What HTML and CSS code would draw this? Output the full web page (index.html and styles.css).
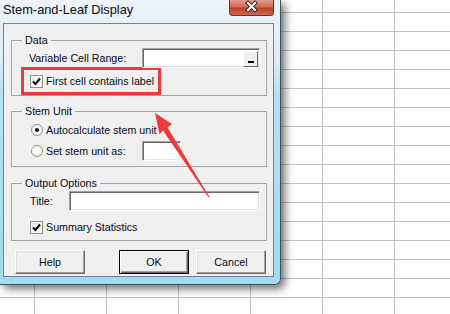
FILE: index.html
```html
<!DOCTYPE html>
<html lang="en">
<head>
    <meta charset="UTF-8">
    <title>Stem-and-Leaf Display</title>
    <link rel="stylesheet" href="styles.css">
</head>
<body>

<div class="window">
    <div class="titlebar">
        <span class="title">Stem-and-Leaf Display</span>
        <span class="close">
            <svg width="45" height="16" viewBox="0 0 45 16">
                <path d="M19 4 L26 11 M26 4 L19 11" stroke="#3a2a28" stroke-width="4" stroke-linecap="square"/>
                <path d="M19 4 L26 11 M26 4 L19 11" stroke="#ffffff" stroke-width="2" stroke-linecap="square"/>
            </svg>
        </span>
    </div>

    <div class="client">
        <fieldset class="group">
            <legend>Data</legend>
            <div class="field-row">
                <span class="field-label">Variable Cell Range:</span>
                <span class="textbox range">
                    <span class="ref-btn"><span class="ref-bar"></span></span>
                </span>
            </div>
            <div class="highlight">
                <span class="check">
                    <svg width="9" height="9" viewBox="0 0 9 9"><path d="M1 4.5 L3.5 7 L8 1.5" fill="none" stroke="#000" stroke-width="2"/></svg>
                </span>
                First cell contains label
            </div>
        </fieldset>

        <fieldset class="group stem">
            <legend>Stem Unit</legend>
            <div class="option-row first">
                <span class="radio checked"></span>
                Autocalculate stem unit
            </div>
            <div class="option-row second">
                <span class="radio"></span>
                <span class="option-label">Set stem unit as:</span>
                <span class="textbox unit"></span>
            </div>
        </fieldset>

        <fieldset class="group output">
            <legend>Output Options</legend>
            <div class="title-row">
                <span class="title-label">Title:</span>
                <span class="textbox title-box"></span>
            </div>
            <div class="summary-row">
                <span class="check">
                    <svg width="9" height="9" viewBox="0 0 9 9"><path d="M1 4.5 L3.5 7 L8 1.5" fill="none" stroke="#000" stroke-width="2"/></svg>
                </span>
                Summary Statistics
            </div>
        </fieldset>

        <div class="buttons">
            <button class="btn help">Help</button>
            <button class="btn ok">OK</button>
            <button class="btn cancel">Cancel</button>
        </div>
    </div>
</div>

<svg class="arrow" width="450" height="314" viewBox="0 0 450 314">
    <polygon points="155,113 172,124 167.5,127.5 209.5,197 208.5,197.5 163,130.5 159.5,134" fill="#f03a3c"/>
</svg>

</body>
</html>
```

FILE: styles.css
```css
body {
    margin: 0;
    width: 450px;
    height: 314px;
    overflow: hidden;
    position: relative;
    font-family: 'Liberation Sans', Arial, sans-serif;
    font-size: 10.7px;
    color: #0a0a1a;
    background-color: #fff;
    background-image:
        linear-gradient(to right, #c2c2c2 1px, transparent 1px),
        linear-gradient(to bottom, #c2c2c2 1px, transparent 1px);
    background-size: 72px 100%, 100% 19px;
    background-position: 34px 0, 0 12px;
}
.window {
    width: 271px;
    padding: 0 6px 7px 3px;
    border-right: 1px solid #3d5261;
    border-bottom: 1px solid #3d5261;
    border-bottom-right-radius: 6px;
    background: linear-gradient(to bottom, #eef3f7 0, #dcebf4 60px, #b4e1f2 95px, #a3dbef 100%);
    box-shadow: 4px 4px 9px rgba(0,0,0,0.55);
}
.titlebar {
    height: 23px;
    display: flex;
    justify-content: space-between;
    align-items: flex-start;
}
.title {
    font-size: 12.8px;
    line-height: 15px;
    padding-top: 2px;
}
.close {
    width: 45px;
    height: 16px;
    box-sizing: border-box;
    border: 1px solid #7c2b20;
    border-top: none;
    border-radius: 0 0 4px 4px;
    background: linear-gradient(to bottom, #e19c8c 0, #d46b57 45%, #c23f27 55%, #cf6a50 100%);
}
.close svg {
    display: block;
    margin: -1px 0 0 -1px;
}
.client {
    height: 252px;
    border: 1px solid #6f8290;
    background: #f0f0f0;
}
.group {
    width: 254px;
    margin: 10px 0 0 7px;
    padding: 0;
    border: 1px solid #a3a3a3;
}
.group legend {
    margin-left: 10px;
    padding: 0 3px;
    line-height: 12px;
}
.group.stem {
    margin-top: 9px;
    padding-bottom: 5px;
}
.group.output {
    margin-top: 10px;
    padding-bottom: 3px;
}
.textbox {
    display: flex;
    justify-content: flex-end;
    box-sizing: border-box;
    height: 20px;
    padding: 1px;
    background: #fff;
    border: 1px solid;
    border-color: #a0a0a0 #fff #fff #a0a0a0;
    box-shadow: inset 1px 1px #696969, inset -1px -1px #e3e3e3;
}
.field-row {
    display: flex;
    align-items: center;
    height: 20px;
    margin-top: 2px;
    padding-left: 17px;
}
.field-label {
    width: 113px;
}
.textbox.range {
    width: 118px;
}
.ref-btn {
    width: 15px;
    height: 16px;
    box-sizing: border-box;
    margin-top: 1px;
    background: #f0f0f0;
    border: 1px solid;
    border-color: #fff #696969 #696969 #fff;
    display: flex;
    justify-content: center;
    align-items: flex-end;
}
.ref-bar {
    width: 6px;
    height: 2px;
    margin-bottom: 3px;
    background: #000;
}
.highlight {
    display: flex;
    align-items: center;
    width: 128px;
    height: 22px;
    margin: -1px 0 0 9px;
    padding-left: 6px;
    border: 3px solid #ee383d;
}
.check {
    display: flex;
    justify-content: center;
    align-items: center;
    width: 13px;
    height: 13px;
    box-sizing: border-box;
    margin-right: 3px;
    border: 1px solid #8e8f8f;
    background: linear-gradient(135deg, #e2e2e2, #fff);
    box-shadow: inset 0 0 0 1px #f4f4f4;
}
.option-row {
    display: flex;
    align-items: center;
    padding-left: 19px;
}
.option-row.first {
    height: 16px;
    margin-top: 5px;
}
.option-row.second {
    height: 20px;
    margin-top: 3px;
}
.radio {
    width: 12px;
    height: 12px;
    box-sizing: border-box;
    margin-right: 3px;
    border: 1px solid #8e8f8f;
    border-radius: 50%;
    background: radial-gradient(circle at 40% 40%, #fff 40%, #e4e4e4);
    position: relative;
}
.radio.checked::after {
    content: '';
    position: absolute;
    left: 3px;
    top: 3px;
    width: 4px;
    height: 4px;
    border-radius: 50%;
    background: #111;
}
.option-label {
    width: 96px;
}
.textbox.unit {
    width: 39px;
}
.title-row {
    display: flex;
    align-items: center;
    height: 20px;
    margin-top: 2px;
    padding-left: 18px;
}
.title-label {
    width: 39px;
}
.textbox.title-box {
    width: 191px;
}
.summary-row {
    display: flex;
    align-items: center;
    height: 20px;
    margin-top: 6px;
    padding-left: 18px;
}
.buttons {
    display: flex;
    margin-top: 9px;
}
.btn {
    width: 70px;
    height: 24px;
    padding: 0;
    font-family: 'Liberation Sans', Arial, sans-serif;
    font-size: 10.7px;
    color: #0a0a1a;
    background: #f0f0f0;
    border: 1px solid;
    border-color: #fff #696969 #696969 #fff;
    box-shadow: inset -1px -1px #a0a0a0, inset 1px 1px #e3e3e3;
}
.btn.help {
    margin-left: 11px;
}
.btn.ok {
    margin-left: 34px;
    outline: 1px solid #000;
    outline-offset: -1px;
    border-color: #000;
    box-shadow: inset 1px 1px #fff, inset -1px -1px #696969, inset -2px -2px #a0a0a0;
}
.btn.cancel {
    margin-left: 7px;
}
.arrow {
    position: absolute;
    left: 0;
    top: 0;
    pointer-events: none;
}
```
